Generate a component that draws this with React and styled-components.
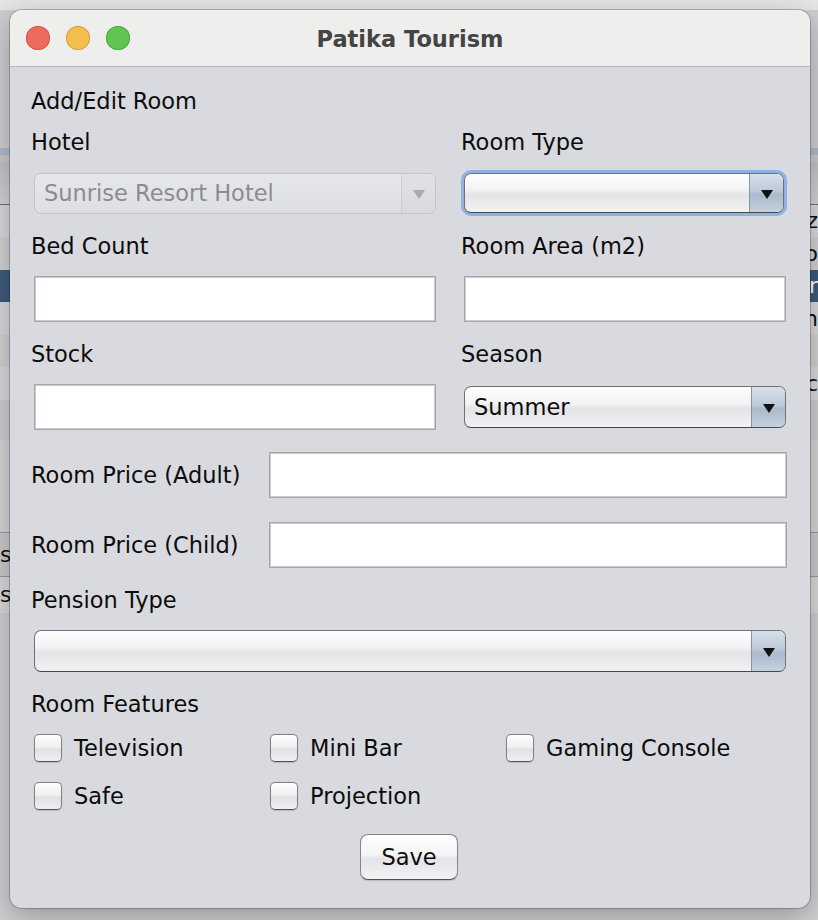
import React from "react";
import styled, { createGlobalStyle, css } from "styled-components";

const GlobalStyle = createGlobalStyle`
  html, body { margin: 0; padding: 0; }
  body {
    background: #d2d3d7;
    font-family: "DejaVu Sans", "Liberation Sans", sans-serif;
  }
`;

/* ---------- desktop + app behind the dialog ---------- */

const Desktop = styled.div`
  position: relative;
  width: 818px;
  height: 920px;
  overflow: hidden;
  background: #d2d3d7;
`;

const BackApp = styled.div`
  display: flex;
  flex-direction: column;
  height: 100%;
`;

const BackTop = styled.div`
  height: 10px;
  background: #e5e5e5;
  flex-shrink: 0;
`;

const BackRow = styled.div`
  box-sizing: border-box;
  display: flex;
  justify-content: space-between;
  height: ${(p) => p.$h}px;
  background: ${(p) => p.$bg};
  border-bottom: ${(p) => (p.$line ? `1px solid ${p.$line}` : "none")};
  color: ${(p) => p.$fg || "#111"};
  font-size: 22px;
  line-height: ${(p) => p.$h}px;
  flex-shrink: 0;
`;

const BackCell = styled.div`
  width: 30px;
  overflow: hidden;
  white-space: nowrap;
  text-align: ${(p) => p.$align};
`;

const backRows = [
  { h: 138, bg: "#cdced2" },
  { h: 7, bg: "#aebbcb" },
  { h: 7, bg: "#c9c9cc" },
  { h: 43, bg: "linear-gradient(#c2c2c5, #d4d4d6)", line: "#6f7074" },
  { h: 32, bg: "#d9d9db", right: "z" },
  { h: 33, bg: "#d1d1d3", right: "o" },
  { h: 32, bg: "#3d5b7b", fg: "#fff", right: "r" },
  { h: 33, bg: "#d8d8da", right: "n" },
  { h: 32, bg: "#d1d1d3" },
  { h: 33, bg: "#d8d8da", right: "c" },
  { h: 40, bg: "#cdcdcf" },
  { h: 93, bg: "#d4d4d6", line: "#9a9a9c" },
  { h: 44, bg: "#c9c9cc", left: "s", line: "#9a9a9c" },
  { h: 36, bg: "#d8d8da", left: "si" },
  { h: 400, bg: "#cfcfd2" },
];

/* ---------- dialog window ---------- */

const Window = styled.div`
  position: absolute;
  left: 10px;
  top: 10px;
  width: 800px;
  height: 898px;
  border-radius: 12px;
  overflow: hidden;
  background: #d9dadf;
  box-shadow: 0 0 0 1px rgba(0, 0, 0, 0.22), 0 8px 28px rgba(0, 0, 0, 0.28);
  display: flex;
  flex-direction: column;
`;

const TitleBar = styled.div`
  position: relative;
  height: 56px;
  flex-shrink: 0;
  background: #eeeeec;
  border-bottom: 1px solid #b7b8bb;
  display: flex;
  align-items: center;
  justify-content: center;
`;

const Lights = styled.div`
  position: absolute;
  left: 16px;
  top: 16px;
  display: flex;
  gap: 16px;
`;

const Light = styled.span`
  width: 24px;
  height: 24px;
  border-radius: 50%;
  background: ${(p) => p.$c};
  box-shadow: inset 0 0 0 1px ${(p) => p.$b};
`;

const Title = styled.div`
  font-weight: bold;
  font-size: 22.5px;
  color: #444;
  margin-top: 1px;
`;

const Body = styled.div`
  display: flex;
  flex-direction: column;
  padding: 19px 23px 0 21px;
  & > * {
    flex-shrink: 0;
  }
`;

const Label = styled.div`
  height: 30px;
  line-height: 30px;
  font-size: 22.5px;
  color: #0c0c0c;
  margin-top: ${(p) => p.$mt || 0}px;
  white-space: nowrap;
`;

const TwoCol = styled.div`
  display: grid;
  grid-template-columns: 430px 1fr;
  grid-template-rows: ${(p) => p.$h}px;
  align-items: center;
  margin-top: ${(p) => p.$mt || 0}px;
`;

const Cell = styled.div`
  display: flex;
  align-items: center;
  padding-left: 3px;
  margin-top: ${(p) => p.$mt || 0}px;
`;

const TextField = styled.div`
  box-sizing: border-box;
  width: ${(p) => p.$w}px;
  height: 46px;
  flex-shrink: 0;
  background: #fff;
  border: 1px solid #a6a7aa;
  box-shadow: inset 0 0 0 1px #c9cacd;
`;

const PriceRow = styled.div`
  display: flex;
  align-items: center;
  justify-content: space-between;
  height: 46px;
  margin-top: ${(p) => p.$mt}px;
`;

const ComboBox = styled.div`
  box-sizing: border-box;
  display: flex;
  align-items: stretch;
  flex-shrink: 0;
  width: ${(p) => p.$w}px;
  height: ${(p) => p.$h}px;
  border-radius: 7px;
  font-size: 22.5px;
  ${(p) =>
    p.$disabled
      ? css`
          border: 1px solid #c3c4c8;
          background: linear-gradient(#e6e7ea, #dedfe2);
          color: #8c8c8e;
        `
      : css`
          border: 1px solid #707176;
          border-bottom-color: #47484c;
          background: linear-gradient(#fefefe 0%, #f3f3f5 40%, #e4e4e7 55%, #f2f2f4 100%);
          color: #0c0c0c;
        `}
  ${(p) =>
    p.$focused &&
    css`
      box-shadow: 0 0 0 3px #8fb2e0;
    `}
`;

const ComboText = styled.span`
  flex: 1;
  display: flex;
  align-items: center;
  padding-left: 9px;
  white-space: nowrap;
  overflow: hidden;
`;

const ComboArrow = styled.span`
  width: 33px;
  display: flex;
  align-items: center;
  justify-content: center;
  border-radius: 0 6px 6px 0;
  ${(p) =>
    p.$disabled
      ? css`
          border-left: 1px solid #cdced1;
          background: linear-gradient(#e1e2e6, #d9dadf);
        `
      : css`
          border-left: 1px solid #8794a3;
          background: linear-gradient(#d6e0ea 0%, #bccad8 45%, #a9bacb 55%, #c4d1de 100%);
        `}
`;

const Triangle = styled.span`
  width: 0;
  height: 0;
  border-left: 6px solid transparent;
  border-right: 6px solid transparent;
  border-top: 9px solid ${(p) => (p.$disabled ? "#a9aaad" : "#111")};
  margin-top: 2px;
`;

const Features = styled.div`
  display: grid;
  grid-template-columns: 236px 236px 1fr;
  grid-auto-rows: 28px;
  row-gap: 20px;
  margin-top: 15px;
  padding-left: 3px;
`;

const Check = styled.label`
  display: flex;
  align-items: center;
  gap: 12px;
  font-size: 22.5px;
  color: #0c0c0c;
  white-space: nowrap;
`;

const Box = styled.span`
  box-sizing: border-box;
  width: 28px;
  height: 28px;
  border-radius: 5px;
  border: 1px solid #7e7f83;
  border-bottom-color: #55565a;
  background: linear-gradient(#fdfdfd, #f0f0f2 45%, #e2e2e5 55%, #eeeef0);
  box-shadow: 0 1px 1px rgba(0, 0, 0, 0.15);
  flex-shrink: 0;
`;

const Footer = styled.div`
  display: flex;
  justify-content: center;
  margin-top: 24px;
`;

const Button = styled.button`
  box-sizing: border-box;
  width: 98px;
  height: 46px;
  border-radius: 8px;
  border: 1px solid #85868a;
  border-bottom-color: #4e4f53;
  background: linear-gradient(#fefefe 0%, #f4f4f6 45%, #e4e4e8 55%, #f2f2f5 100%);
  box-shadow: 0 1px 1px rgba(0, 0, 0, 0.15);
  font-family: inherit;
  font-size: 22.5px;
  color: #0c0c0c;
  padding: 0;
`;

function Combo({ w, h = 42, value, disabled, focused }) {
  return (
    <ComboBox $w={w} $h={h} $disabled={disabled} $focused={focused}>
      <ComboText>{value}</ComboText>
      <ComboArrow $disabled={disabled}>
        <Triangle $disabled={disabled} />
      </ComboArrow>
    </ComboBox>
  );
}

function Checkbox({ label }) {
  return (
    <Check>
      <Box />
      {label}
    </Check>
  );
}

export default function App() {
  return (
    <>
      <GlobalStyle />
      <Desktop>
        <BackApp>
          <BackTop />
          {backRows.map((r, i) => (
            <BackRow key={i} $h={r.h} $bg={r.bg} $fg={r.fg} $line={r.line}>
              <BackCell $align="left">{r.left}</BackCell>
              <BackCell $align="right">{r.right}</BackCell>
            </BackRow>
          ))}
        </BackApp>

        <Window>
          <TitleBar>
            <Lights>
              <Light $c="#ee6a5f" $b="#d6554b" />
              <Light $c="#f5bf4f" $b="#d8a03c" />
              <Light $c="#61c554" $b="#4fa843" />
            </Lights>
            <Title>Patika Tourism</Title>
          </TitleBar>

          <Body>
            <Label>Add/Edit Room</Label>

            <TwoCol $h={30} $mt={11}>
              <Label>Hotel</Label>
              <Label>Room Type</Label>
            </TwoCol>
            <TwoCol $h={50} $mt={11}>
              <Cell>
                <Combo w={402} h={41} value="Sunrise Resort Hotel" disabled />
              </Cell>
              <Cell>
                <Combo w={320} h={40} value="" focused />
              </Cell>
            </TwoCol>

            <TwoCol $h={30} $mt={13}>
              <Label>Bed Count</Label>
              <Label>Room Area (m2)</Label>
            </TwoCol>
            <TwoCol $h={46} $mt={15}>
              <Cell>
                <TextField $w={402} />
              </Cell>
              <Cell>
                <TextField $w={322} />
              </Cell>
            </TwoCol>

            <TwoCol $h={30} $mt={17}>
              <Label>Stock</Label>
              <Label>Season</Label>
            </TwoCol>
            <TwoCol $h={46} $mt={15}>
              <Cell>
                <TextField $w={402} />
              </Cell>
              <Cell>
                <Combo w={322} h={42} value="Summer" />
              </Cell>
            </TwoCol>

            <PriceRow $mt={22}>
              <Label>Room Price (Adult)</Label>
              <TextField $w={518} />
            </PriceRow>
            <PriceRow $mt={24}>
              <Label>Room Price (Child)</Label>
              <TextField $w={518} />
            </PriceRow>

            <Label $mt={17}>Pension Type</Label>
            <Cell $mt={15}>
              <Combo w={752} h={42} value="" />
            </Cell>

            <Label $mt={17}>Room Features</Label>
            <Features>
              <Checkbox label="Television" />
              <Checkbox label="Mini Bar" />
              <Checkbox label="Gaming Console" />
              <Checkbox label="Safe" />
              <Checkbox label="Projection" />
            </Features>

            <Footer>
              <Button>Save</Button>
            </Footer>
          </Body>
        </Window>
      </Desktop>
    </>
  );
}
